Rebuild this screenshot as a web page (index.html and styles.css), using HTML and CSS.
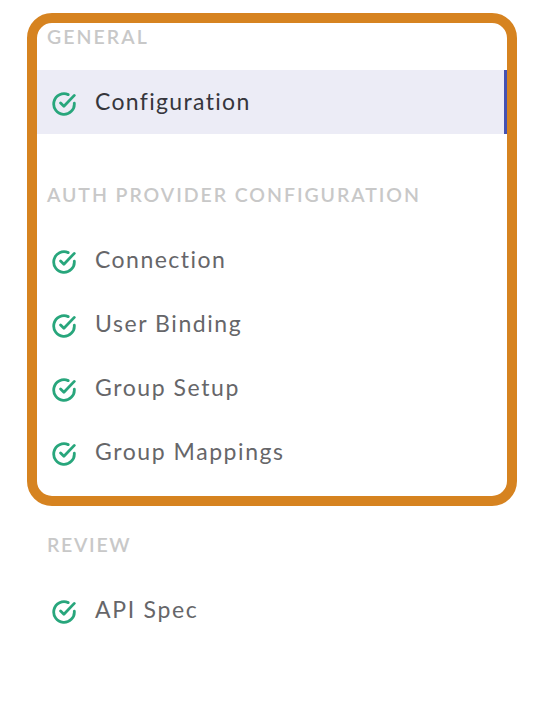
FILE: index.html
```
<!DOCTYPE html>
<html lang="en">
<head>
<meta charset="utf-8">
<title>Configuration</title>
<link rel="stylesheet" href="styles.css">
</head>
<body>
<svg class="defs" width="0" height="0">
  <symbol id="check" viewBox="0 0 24 24">
    <path d="M16.2 2.6A10.3 10.3 0 1 0 22.3 11.2M8.6 10.9l3.3 3.3L22.3 3.4"/>
  </symbol>
</svg>
<nav class="nav">
  <section class="group">
    <h2 class="heading general">General</h2>
    <a class="item active"><svg class="icon"><use href="#check"/></svg><span class="configuration">Configuration</span></a>
  </section>
  <section class="group">
    <h2 class="heading provider">Auth Provider Configuration</h2>
    <a class="item"><svg class="icon"><use href="#check"/></svg><span class="connection">Connection</span></a>
    <a class="item"><svg class="icon"><use href="#check"/></svg><span class="binding">User Binding</span></a>
    <a class="item"><svg class="icon"><use href="#check"/></svg><span class="setup">Group Setup</span></a>
    <a class="item"><svg class="icon"><use href="#check"/></svg><span class="mappings">Group Mappings</span></a>
  </section>
  <section class="group">
    <h2 class="heading review">Review</h2>
    <a class="item"><svg class="icon"><use href="#check"/></svg><span class="spec">API Spec</span></a>
  </section>
</nav>
<div class="highlight"></div>
</body>
</html>
```
FILE: styles.css
```
* { box-sizing: border-box; }
body {
  margin: 0;
  height: 706px;
  background: #fff;
  font-family: Lato, "Liberation Sans", sans-serif;
  overflow: hidden;
}
.defs { position: absolute; }
.nav {
  width: 470px;
  margin-left: 37px;
  padding-top: 22px;
}
.group { margin-bottom: 46px; }
.heading {
  margin: 0 0 16px;
  padding-left: 10px;
  height: 32px;
  line-height: 30px;
  font-size: 19.5px;
  font-weight: 600;
  text-transform: uppercase;
  white-space: nowrap;
  color: #c8c8c8;
}
.general { letter-spacing: 2.05px; }
.provider { letter-spacing: 1.94px; }
.review { letter-spacing: 1.7px; }
.item {
  display: flex;
  align-items: center;
  gap: 19px;
  height: 64px;
  padding-left: 15px;
  font-size: 23px;
  line-height: 32px;
  white-space: nowrap;
  color: #666669;
}
.item span { padding-bottom: 2px; }
.item.active {
  background: #ececf6;
  border-right: 3px solid #4552b1;
  color: #36363c;
}
.configuration { letter-spacing: 1.33px; }
.connection { letter-spacing: 1.47px; }
.binding { letter-spacing: 1.57px; }
.setup { letter-spacing: 1.57px; }
.mappings { letter-spacing: 1.57px; }
.spec { letter-spacing: 1.7px; }
.icon {
  width: 24px;
  height: 24px;
  margin-top: 4px;
  fill: none;
  stroke: #28a67c;
  stroke-width: 2.8;
  stroke-linecap: round;
  stroke-linejoin: round;
}
.highlight {
  position: absolute;
  left: 27px;
  top: 13px;
  width: 490px;
  height: 493px;
  border: 10px solid #d68320;
  border-radius: 25px;
}
```
